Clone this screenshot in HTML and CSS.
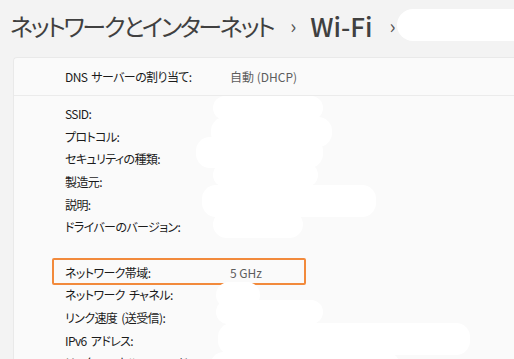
FILE: index.html
```html
<!DOCTYPE html>
<html lang="ja">
<head>
    <meta charset="UTF-8">
    <title>Wi-Fi プロパティ</title>
    <link rel="stylesheet" href="styles.css">
</head>
<body>
    <div class="page">
        <header class="breadcrumb">
            <span class="crumb">ネットワークとインターネット</span>
            <span class="chevron">›</span>
            <span class="crumb latin">Wi-Fi</span>
            <span class="chevron">›</span>
            <span class="crumb-hidden"></span>
        </header>

        <section class="card">
            <div class="dns-row">
                <span class="label">DNS サーバーの割り当て:</span>
                <span class="value">自動 (DHCP)</span>
            </div>
            <div class="props">
                <div class="row"><span class="label">SSID:</span><span class="value"></span></div>
                <div class="row"><span class="label">プロトコル:</span><span class="value"></span></div>
                <div class="row"><span class="label">セキュリティの種類:</span><span class="value"></span></div>
                <div class="row"><span class="label">製造元:</span><span class="value"></span></div>
                <div class="row"><span class="label">説明:</span><span class="value"></span></div>
                <div class="row"><span class="label">ドライバーのバージョン:</span><span class="value"></span></div>
                <div class="row blank"></div>
                <div class="row marked"><span class="label">ネットワーク帯域:</span><span class="value">5 GHz</span></div>
                <div class="row"><span class="label">ネットワーク チャネル:</span><span class="value"></span></div>
                <div class="row"><span class="label">リンク速度 (送受信):</span><span class="value"></span></div>
                <div class="row"><span class="label">IPv6 アドレス:</span><span class="value"></span></div>
                <div class="row"><span class="label">リンクローカル IPv6 アドレス:</span><span class="value"></span></div>
            </div>
        </section>

        <!-- redacted values -->
        <div class="blot" style="left:213px;top:96px;width:110px;height:24px"></div>
        <div class="blot" style="left:211px;top:117px;width:121px;height:30px"></div>
        <div class="blot" style="left:196px;top:137px;width:127px;height:31px"></div>
        <div class="blot" style="left:213px;top:163px;width:105px;height:24px"></div>
        <div class="blot" style="left:202px;top:185px;width:174px;height:32px"></div>
        <div class="blot" style="left:213px;top:211px;width:90px;height:27px"></div>
        <div class="blot" style="left:216px;top:282px;width:44px;height:26px"></div>
        <div class="blot" style="left:216px;top:300px;width:107px;height:24px"></div>
        <div class="blot" style="left:218px;top:323px;width:252px;height:32px"></div>
        <div class="blot" style="left:210px;top:352px;width:190px;height:30px"></div>
    </div>
</body>
</html>
```

FILE: styles.css
```css
body {
    margin: 0;
    background-color: #f3f3f3;
    font-family: "Noto Sans CJK JP", "Noto Sans", sans-serif;
    font-feature-settings: "palt";
    color: #1b1b1b;
}
.page {
    position: relative;
    width: 514px;
    height: 359px;
    overflow: hidden;
}
.breadcrumb {
    display: flex;
    align-items: center;
    height: 50px;
    padding-left: 10px;
    white-space: nowrap;
}
.crumb {
    font-size: 24px;
    font-weight: 400;
    color: #404040;
    letter-spacing: -2.3px;
}
.crumb.latin {
    font-size: 26px;
    font-weight: 500;
    letter-spacing: 0;
}
.chevron {
    font-size: 20px;
    color: #555;
    margin: 0 14px 0 17px;
}
.crumb-hidden {
    flex: none;
    width: 180px;
    height: 32px;
    margin-left: -13px;
    background-color: #fff;
    border-radius: 16px;
}
.card {
    margin: 7px 0 0 13px;
    background-color: #fafafa;
    border: 1px solid #e9e9e9;
    border-right: none;
    border-bottom: none;
    border-radius: 4px 0 0 0;
}
.dns-row,
.row {
    display: grid;
    grid-template-columns: 165px 1fr;
    padding-left: 51px;
    font-size: 12px;
    letter-spacing: -0.6px;
    word-spacing: 2px;
    white-space: nowrap;
}
.dns-row {
    height: 37px;
    align-items: center;
    border-bottom: 1px solid #ebebeb;
}
.props {
    padding-top: 6px;
}
.row {
    position: relative;
    height: 22.7px;
    align-items: center;
}
.value {
    color: #5d5d5d;
    letter-spacing: 0;
    word-spacing: 0;
}
.row.marked::after {
    content: "";
    position: absolute;
    left: 38px;
    top: -3px;
    width: 250px;
    height: 23px;
    border: 2px solid #f28a3c;
    border-radius: 2px;
}
.blot {
    position: absolute;
    background-color: #fff;
    border-radius: 14px;
}
```
